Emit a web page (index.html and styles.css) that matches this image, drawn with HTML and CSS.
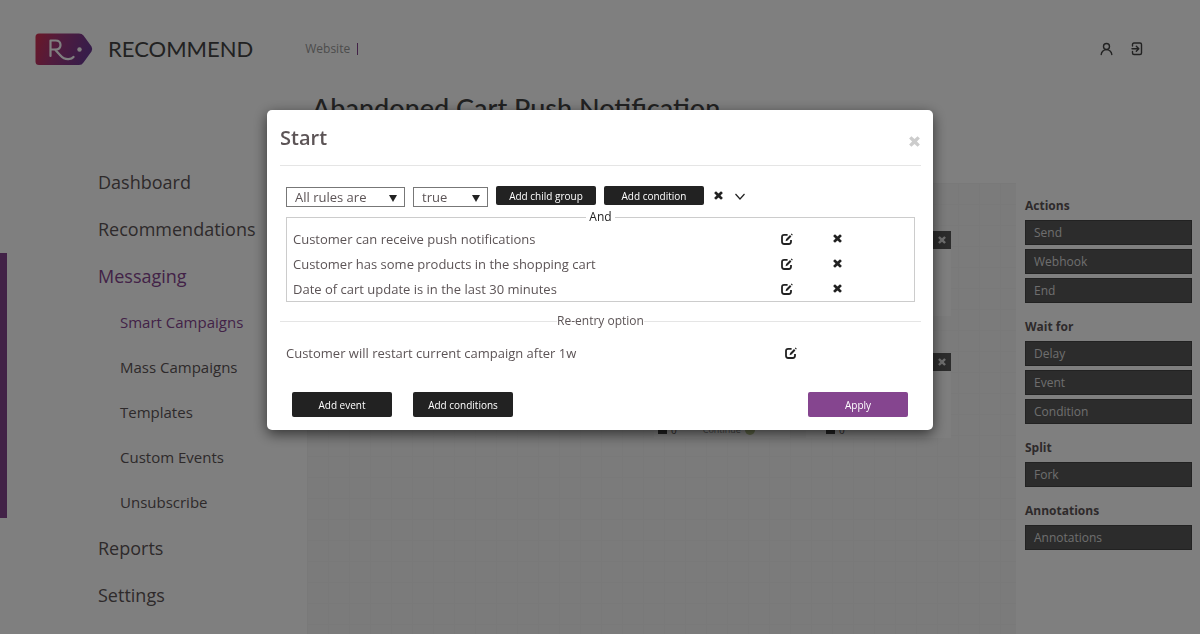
FILE: index.html
```html
<!DOCTYPE html>
<html lang="en">

<head>
	<meta charset="UTF-8">
	<title>Recommend</title>
	<link rel="stylesheet" href="styles.css">
</head>

<body>
	<!-- shared icons -->
	<svg class="sprite" aria-hidden="true">
		<symbol id="icon-close" viewBox="0 0 10 10">
			<path d="M2.2 0.2L5 2.8L7.8 0.2L9.9 2.2L7.2 5L9.9 7.8L7.8 9.8L5 7.2L2.2 9.8L0.1 7.8L2.8 5L0.1 2.2Z" fill="currentColor" />
		</symbol>
		<symbol id="icon-edit" viewBox="0 0 12 12">
			<path d="M6.6 1.8H3.2Q1 1.8 1 4V8.8Q1 11 3.2 11H7.8Q10 11 10 8.8V7" fill="none" stroke="currentColor" stroke-width="1.8" />
			<path d="M4.6 8.2L5.1 6L9 2.1L10.4 3.5L6.6 7.5Z" fill="currentColor" />
			<path d="M9.8 1.3L10.6 0.5L11.8 1.7L11 2.5Z" fill="currentColor" />
		</symbol>
	</svg>

	<div class="page">
		<header class="header">
			<a href="#" class="logo">
				<svg width="58" height="33" viewBox="0 0 58 33" aria-hidden="true">
					<defs>
						<linearGradient id="logoFill" x1="0" y1="0" x2="1" y2="0.2">
							<stop offset="0" stop-color="#d6304f" />
							<stop offset="0.45" stop-color="#a0387c" />
							<stop offset="1" stop-color="#6f3a94" />
						</linearGradient>
					</defs>
					<path d="M4 0.5H44Q47 0.5 48.5 2.5L56.5 13.5Q58 16 56.5 18.5L48.5 29.5Q47 32 44 32H4Q0.5 32 0.5 28.5V4Q0.5 0.5 4 0.5Z" fill="url(#logoFill)" />
					<path d="M15.5 23V7.5H20.5Q25.5 7.5 25.5 12T20.5 16.5H15.5M20 16.5L25 22Q29 26.5 33.5 26.2Q37 26 38.5 24" fill="none" stroke="#fff" stroke-width="2.2" stroke-linecap="round" stroke-linejoin="round" />
					<circle cx="44.5" cy="16.5" r="2.2" fill="#fff" />
				</svg>
				<span class="logo-text">RECOMMEND</span>
			</a>
			<div class="site-select">Website</div>
			<div class="header-actions">
				<a href="#" aria-label="Account">
					<svg width="14" height="14" viewBox="0 0 14 14" fill="none" stroke="currentColor" stroke-width="1.4" stroke-linecap="round">
						<circle cx="6.5" cy="4.5" r="3" />
						<path d="M1.2 12.5C1.4 9.800 3.800 7.600 6.500 7.600S11.600 9.800 11.800 12.500" />
					</svg>
				</a>
				<a href="#" aria-label="Log out">
					<svg width="14" height="14" viewBox="0 0 14 14" fill="none" stroke="currentColor" stroke-width="1.4" stroke-linecap="round" stroke-linejoin="round">
						<path d="M2.5 4V2.5Q2.5 1 4 1H10Q11.5 1 11.5 2.5V11Q11.5 12.5 10 12.5H4Q2.5 12.5 2.5 11V9.500" />
						<path d="M2 6.8H8.5M6.3 4.300L8.800 6.800L6.300 9.300" />
					</svg>
				</a>
			</div>
		</header>

		<div class="main">
			<nav class="sidebar">
				<a href="#">Dashboard</a>
				<a href="#">Recommendations</a>
				<div class="nav-group">
					<a href="#" class="active">Messaging</a>
					<div class="subnav">
						<a href="#" class="active">Smart Campaigns</a>
						<a href="#">Mass Campaigns</a>
						<a href="#">Templates</a>
						<a href="#">Custom Events</a>
						<a href="#">Unsubscribe</a>
					</div>
				</div>
				<a href="#">Reports</a>
				<a href="#">Settings</a>
			</nav>

			<div class="content">
				<h1>Abandoned Cart Push Notification</h1>
				<div class="workspace">
					<div class="canvas">
						<div class="node node-top"><span class="node-close"><svg width="8" height="8"><use href="#icon-close" /></svg></span></div>
						<div class="node node-bottom"><span class="node-close"><svg width="8" height="8"><use href="#icon-close" /></svg></span>
							<div class="node-footer"><i class="node-user"></i>0</div>
						</div>
						<div class="node node-left">
							<div class="node-footer"><i class="node-user"></i>0<span class="node-state">Continue</span><i class="node-dot"></i></div>
						</div>
					</div>
					<aside class="palette">
						<h2>Actions</h2>
						<button>Send</button>
						<button>Webhook</button>
						<button>End</button>
						<h2>Wait for</h2>
						<button>Delay</button>
						<button>Event</button>
						<button>Condition</button>
						<h2>Split</h2>
						<button>Fork</button>
						<h2>Annotations</h2>
						<button>Annotations</button>
					</aside>
				</div>
			</div>
		</div>
	</div>

	<div class="modal">
		<div class="modal-content" role="dialog" aria-labelledby="modalTitle">
			<div class="modal-header">
				<h3 id="modalTitle">Start</h3>
				<button class="icon-btn modal-close" aria-label="Close"><svg width="11" height="11"><use href="#icon-close" /></svg></button>
			</div>

			<div class="rules">
				<div class="rules-bar">
					<span class="select-box select-rules">
						<select aria-label="Rules">
							<option>All rules are</option>
							<option>Any rule is</option>
						</select>
					</span>
					<span class="select-box select-value">
						<select aria-label="Value">
							<option>true</option>
							<option>false</option>
						</select>
					</span>
					<button class="btn btn-small">Add child group</button>
					<button class="btn btn-small">Add condition</button>
					<button class="icon-btn" aria-label="Remove group"><svg width="9" height="9"><use href="#icon-close" /></svg></button>
					<button class="icon-btn" aria-label="Collapse"><svg width="12" height="12" viewBox="0 0 12 12"><path d="M1.5 4L6 9L10.5 4" fill="none" stroke="currentColor" stroke-width="1.2" /></svg></button>
				</div>
				<fieldset>
					<legend>And</legend>
					<div class="rule">
						<span>Customer can receive push notifications</span>
						<button class="icon-btn" aria-label="Edit"><svg width="12" height="12"><use href="#icon-edit" /></svg></button>
						<button class="icon-btn" aria-label="Remove"><svg width="9" height="9"><use href="#icon-close" /></svg></button>
					</div>
					<div class="rule">
						<span>Customer has some products in the shopping cart</span>
						<button class="icon-btn" aria-label="Edit"><svg width="12" height="12"><use href="#icon-edit" /></svg></button>
						<button class="icon-btn" aria-label="Remove"><svg width="9" height="9"><use href="#icon-close" /></svg></button>
					</div>
					<div class="rule">
						<span>Date of cart update is in the last 30 minutes</span>
						<button class="icon-btn" aria-label="Edit"><svg width="12" height="12"><use href="#icon-edit" /></svg></button>
						<button class="icon-btn" aria-label="Remove"><svg width="9" height="9"><use href="#icon-close" /></svg></button>
					</div>
				</fieldset>
			</div>

			<div class="divider">Re-entry option</div>
			<div class="reentry">
				<span>Customer will restart current campaign after 1w</span>
				<button class="icon-btn" aria-label="Edit"><svg width="12" height="12"><use href="#icon-edit" /></svg></button>
			</div>

			<div class="modal-footer">
				<button class="btn">Add event</button>
				<button class="btn">Add conditions</button>
				<button class="btn btn-apply">Apply</button>
			</div>
		</div>
	</div>
</body>

</html>
```
FILE: styles.css
```css
* {
	box-sizing: border-box;
}

body {
	font-family: "Open Sans", "Noto Sans", sans-serif;
	font-size: 13px;
	margin: 0;
	color: #5c5456;
	background-color: #fff;
}

a {
	color: inherit;
	text-decoration: none;
}

button,
select {
	font-family: inherit;
	cursor: pointer;
}

svg {
	display: block;
}

.sprite {
	position: absolute;
	width: 0;
	height: 0;
}

.page {
	height: 100vh;
	overflow: hidden;
}

/* header */
.header {
	display: flex;
	align-items: center;
	height: 80px;
	padding: 18px 56px 0 35px;
}

.logo {
	display: flex;
	align-items: center;
	gap: 15px;
}

.logo-text {
	font-family: Lato, sans-serif;
	font-size: 22px;
	line-height: 24px;
	color: #444;
}

.site-select {
	margin-left: 52px;
	padding-right: 7px;
	font-size: 12px;
	line-height: 12px;
	color: #999;
	border-right: 1px solid #85458f;
}

.header-actions {
	display: flex;
	gap: 16px;
	margin-left: auto;
	color: #444;
}

/* left menu */
.main {
	display: flex;
}

.sidebar {
	width: 307px;
	flex: none;
	padding-top: 79px;
	font-size: 18px;
	line-height: 47px;
}

	.sidebar a {
		display: block;
		padding-left: 98px;
	}

	.sidebar .active {
		color: #85458f;
	}

.nav-group {
	background: linear-gradient(#85458f, #85458f) no-repeat;
	background-size: 7px 265px;
}

.subnav {
	font-size: 15px;
	line-height: 45px;
}

	.subnav a {
		padding-left: 120px;
	}

/* content */
.content {
	flex: 1;
}

h1 {
	margin: 11px 0 0 5px;
	font-family: Lato, sans-serif;
	font-size: 27px;
	font-weight: 500;
	line-height: 34px;
	color: #444;
}

.workspace {
	display: flex;
	margin-top: 58px;
}

.canvas {
	position: relative;
	flex: 1;
	height: 460px;
	background-color: #f6f6f6;
	background-image: linear-gradient(#f3f3f3 1px, transparent 1px), linear-gradient(90deg, #f3f3f3 1px, transparent 1px);
	background-size: 21px 21px;
}

.node {
	position: absolute;
	background-color: #fcfcfc;
}

.node-top {
	top: 48px;
	left: 499px;
	width: 145px;
	height: 85px;
}

.node-bottom {
	top: 170px;
	left: 499px;
	width: 145px;
	height: 85px;
}

.node-left {
	top: 170px;
	left: 347px;
	width: 136px;
	height: 85px;
}

.node-close {
	position: absolute;
	top: 0;
	right: 0;
	padding: 5px;
	background-color: #585858;
	color: #ddd;
}

.node-footer {
	display: flex;
	align-items: center;
	gap: 4px;
	padding: 71px 0 0 4px;
	font-size: 10px;
	line-height: 12px;
}

.node-bottom .node-footer {
	padding-left: 20px;
}

.node-user {
	width: 9px;
	height: 8px;
	border-radius: 3px 3px 0 0;
	background-color: #444;
}

.node-state {
	margin-left: 22px;
	font-size: 9px;
	color: #888;
}

.node-dot {
	width: 10px;
	height: 10px;
	border-radius: 50%;
	background-color: #b5c48a;
}

.palette {
	width: 184px;
	padding: 13px 8px 0 9px;
}

	.palette h2 {
		margin: 0 0 4px;
		font-size: 12px;
		line-height: 20px;
	}

	.palette button + h2 {
		margin-top: 14px;
	}

	.palette button {
		display: block;
		width: 100%;
		height: 25px;
		margin-bottom: 4px;
		padding: 0 8px;
		font-size: 12px;
		text-align: left;
		color: #ddd;
		background-color: #585858;
		border: 1px solid #444;
	}

/* modal */
.modal {
	position: fixed;
	top: 0;
	left: 0;
	width: 100%;
	height: 100%;
	padding-top: 110px;
	background-color: rgba(0, 0, 0, 0.5);
	z-index: 999;
}

.modal-content {
	width: 666px;
	margin: 0 auto;
	padding: 0 12px 13px 13px;
	background-color: #fff;
	border-radius: 5px;
	box-shadow: 0 4px 14px rgba(0, 0, 0, 0.6);
}

.modal-header {
	display: flex;
	align-items: center;
	justify-content: space-between;
	height: 56px;
	border-bottom: 1px solid #e5e5e5;
}

	.modal-header h3 {
		margin: 0;
		font-size: 20px;
		font-weight: 600;
		line-height: 26px;
	}

.icon-btn {
	padding: 0;
	border: none;
	background: none;
	color: #222;
}

.modal-close {
	padding: 8px 1px 0 0;
	color: #ccc;
}

.rules {
	padding: 20px 6px 0;
}

.rules-bar {
	display: flex;
	gap: 8px;
}

	.rules-bar .icon-btn {
		width: 13px;
		height: 19px;
		display: flex;
		align-items: center;
		justify-content: center;
	}

.select-box {
	position: relative;
	height: 20px;
	margin: 1px 0;
}

	.select-box::after {
		content: "";
		position: absolute;
		top: 8px;
		right: 8px;
		border: 4px solid transparent;
		border-top: 7px solid #222;
		border-bottom: none;
		pointer-events: none;
	}

	.select-box select {
		display: block;
		appearance: none;
		width: 100%;
		height: 100%;
		padding: 0 8px;
		font-size: 13px;
		line-height: 18px;
		color: #5c5456;
		background-color: #fff;
		border: 1px solid #777;
		border-radius: 0;
	}

.select-rules {
	width: 119px;
}

.select-value {
	width: 75px;
}

.btn {
	width: 100px;
	height: 25px;
	padding: 0;
	font-size: 10px;
	font-weight: 500;
	color: #fff;
	background-color: #222;
	border: none;
	border-radius: 2px;
}

.btn-small {
	height: 19px;
}

fieldset {
	margin: 0;
	padding: 0 6px;
	border: 1px solid #ccc;
}

legend {
	margin: 0 auto;
	padding: 0 3px;
	font-size: 12px;
	line-height: 18px;
	color: #222;
}

.rule {
	display: flex;
	align-items: center;
	height: 25px;
}

	.rule span {
		width: 488px;
	}

	.rule .icon-btn + .icon-btn {
		margin-left: 40px;
	}

.divider {
	display: flex;
	align-items: center;
	margin-top: 10px;
	font-size: 12px;
	line-height: 18px;
}

	.divider::before,
	.divider::after {
		content: "";
		flex: 1;
		height: 1px;
		background-color: #e5e5e5;
	}

.reentry {
	display: flex;
	align-items: center;
	height: 25px;
	margin: 10px 6px 0;
}

	.reentry span {
		width: 499px;
	}

.modal-footer {
	display: flex;
	gap: 21px;
	margin-top: 27px;
	padding: 0 13px 0 12px;
}

.btn-apply {
	margin-left: auto;
	background-color: #85458f;
}
```
